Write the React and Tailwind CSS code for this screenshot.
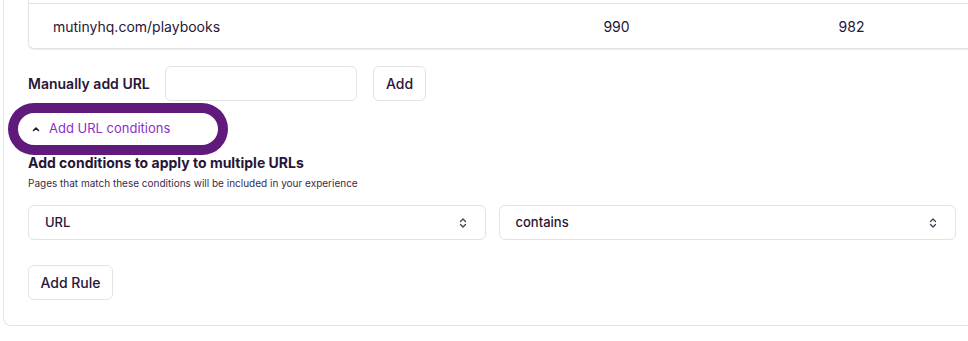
import React from "react";

function UpDown() {
  return (
    <svg width="8" height="12" viewBox="0 0 8 12" fill="none" stroke="#4b3a5c" strokeWidth="1.3" strokeLinecap="round" strokeLinejoin="round">
      <path d="M1.5 4.5 L4 2 L6.5 4.5" />
      <path d="M1.5 7.5 L4 10 L6.5 7.5" />
    </svg>
  );
}

export default function App() {
  const font = { fontFamily: "Inter, 'Noto Sans', sans-serif" };
  return (
    <div className="w-[968px] h-[341px] overflow-hidden bg-white text-[#281637]" style={font}>
      <div className="ml-[3px] -mt-[20px] w-[1100px] border-l border-b border-[#e3e3e3] rounded-bl-[8px] pl-[24px] pb-[25px]">
        {/* table */}
        <div className="w-[1000px] border-l border-b border-[#e3e3e3] rounded-bl-[6px] shadow-[0_1px_1px_rgba(0,0,0,0.08)]">
          <div className="h-[23px]" />
          <div className="flex items-center h-[45px] border-t border-[#e3e3e3] text-[14px]">
            <div className="w-[470px] pl-[24px]">mutinyhq.com/playbooks</div>
            <div className="w-[235px] text-center">990</div>
            <div className="w-[235px] text-center">982</div>
          </div>
        </div>

        {/* manual add */}
        <div className="flex items-center mt-[17px] h-[35px]">
          <span className="text-[14px] font-semibold w-[137px]">Manually add URL</span>
          <div className="w-[192px] h-[35px] border border-[#e3e3e3] rounded-[6px] bg-white" />
          <button className="ml-[16px] w-[53px] h-[35px] border border-[#e3e3e3] rounded-[6px] text-[14px] font-medium bg-white">Add</button>
        </div>

        {/* url conditions toggle */}
        <div className="mt-[12px]">
          <button className="-ml-[10px] w-[200px] h-[32px] rounded-[16px] ring-[10px] ring-[#601a7b] bg-white flex items-center pl-[14px] gap-[9px]">
            <svg width="8" height="6" viewBox="0 0 8 6" fill="none" stroke="#281637" strokeWidth="1.6" strokeLinecap="round" strokeLinejoin="round">
              <path d="M1.5 4.5 L4 2 L6.5 4.5" />
            </svg>
            <span className="text-[13px] text-[#8d2fc7]">Add URL conditions</span>
          </button>
        </div>

        <div className="mt-[8px] text-[14px] font-bold leading-[20px]">Add conditions to apply to multiple URLs</div>
        <div className="mt-[3px] text-[10px] leading-[14px] text-[#3a2a4a]">Pages that match these conditions will be included in your experience</div>

        <div className="flex gap-[13px] mt-[15px] w-[928px]">
          <div className="flex-1 h-[35px] border border-[#e3e3e3] rounded-[6px] flex items-center justify-between pl-[16px] pr-[18px] text-[13px] font-medium">
            <span>URL</span>
            <UpDown />
          </div>
          <div className="flex-1 h-[35px] border border-[#e3e3e3] rounded-[6px] flex items-center justify-between pl-[16px] pr-[18px] text-[13px] font-medium">
            <span>contains</span>
            <UpDown />
          </div>
        </div>

        <button className="mt-[25px] w-[85px] h-[35px] border border-[#e3e3e3] rounded-[6px] text-[14px] font-medium bg-white">Add Rule</button>
      </div>
    </div>
  );
}
